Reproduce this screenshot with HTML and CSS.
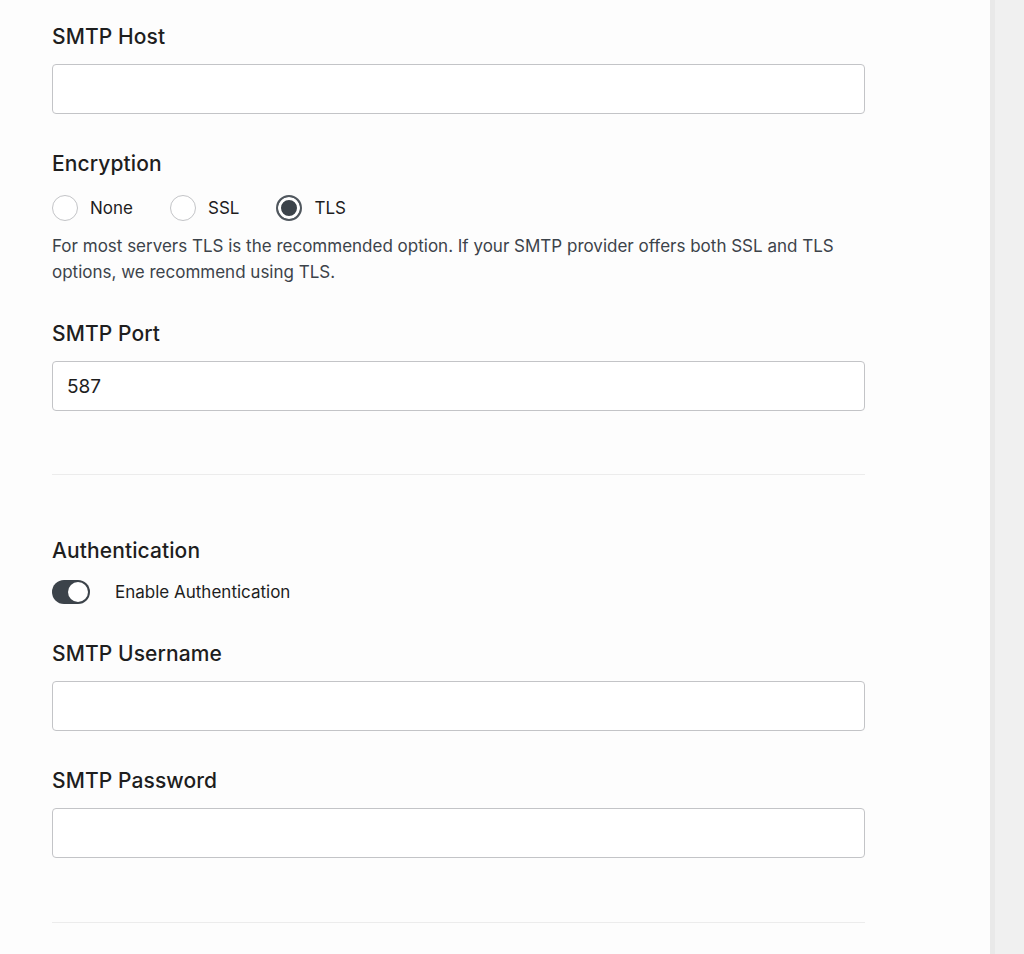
FILE: index.html
```html
<!DOCTYPE html>
<html>
<head>
  <meta charset="utf-8">
  <title>SMTP Settings</title>
  <link rel="stylesheet" href="styles.css">
</head>
<body>
<div class="layout">
  <main class="main">
    <div class="field first">
      <label class="label" for="host">SMTP Host</label>
      <input class="text" id="host" type="text">
    </div>

    <div class="field">
      <div class="label">Encryption</div>
      <div class="radios">
        <label class="radio"><span class="dot"></span>None</label>
        <label class="radio"><span class="dot"></span>SSL</label>
        <label class="radio"><span class="dot on"></span>TLS</label>
      </div>
      <p class="help">For most servers TLS is the recommended option. If your SMTP provider offers both SSL and TLS options, we recommend using TLS.</p>
    </div>

    <div class="field">
      <label class="label" for="port">SMTP Port</label>
      <input class="text" id="port" type="text" value="587">
    </div>

    <hr class="divider">

    <div class="field">
      <div class="label">Authentication</div>
      <label class="toggle"><span class="switch"><span class="knob"></span></span>Enable Authentication</label>
    </div>

    <div class="field">
      <label class="label" for="user">SMTP Username</label>
      <input class="text" id="user" type="text">
    </div>

    <div class="field">
      <label class="label" for="pass">SMTP Password</label>
      <input class="text" id="pass" type="password">
    </div>

    <hr class="divider last">
  </main>
  <aside class="side"></aside>
</div>
</body>
</html>
```

FILE: styles.css
```css
* {box-sizing: border-box}
html, body {
  margin: 0; padding: 0;
  height: 100%;
}
body {
  font-family: Inter, "Liberation Sans", sans-serif;
  color: #1e1e1e;
  background: #fdfdfd;
  overflow: hidden;
}
.layout {
  display: flex;
  height: 954px;
}
.main {
  width: 990px;
  padding: 22px 0 0 52px;
}
.side {
  flex: 1;
  background: #f0f0f0;
  border-left: 5px solid #e9e9e9;
}

.field {
  width: 813px;
  margin-top: 35px;
}
.field.first {
  margin-top: 0;
}
.label {
  display: block;
  font-size: 21px;
  line-height: 28px;
  padding-top: 1px;
  font-weight: 500;
  letter-spacing: 0.1px;
  color: #1e1e1e;
  margin-bottom: 13px;
}
.text {
  display: block;
  width: 813px;
  height: 50px;
  border: 1px solid #c3c4c7;
  border-radius: 4px;
  background: #fff;
  padding: 0 14px;
  font-family: inherit;
  font-size: 19px;
  color: #1e1e1e;
}

.radios {
  display: flex;
  gap: 37px;
  margin-top: 17px;
}
.radio {
  display: flex;
  align-items: center;
  gap: 12px;
  font-size: 17px;
  line-height: 26px;
  color: #1e1e1e;
}
.dot {
  width: 26px;
  height: 26px;
  border-radius: 50%;
  border: 1px solid #c3c4c7;
  background: #fff;
}
.dot.on {
  border: 2px solid #50575e;
  background: #3c434a;
  box-shadow: inset 0 0 0 3px #fff;
}
.help {
  margin: 12px 0 -1px;
  font-size: 17px;
  line-height: 26px;
  color: #3c434a;
}

.divider {
  width: 813px;
  margin: 63px 0 61px;
  border: 0;
  border-top: 1px solid #ececec;
}
.divider.last {
  margin-top: 64px;
}

.toggle {
  display: flex;
  align-items: center;
  gap: 25px;
  margin-top: 15px;
  font-size: 17px;
  line-height: 24px;
  color: #1e1e1e;
}
.switch {
  display: flex;
  justify-content: flex-end;
  align-items: center;
  width: 38px;
  height: 24px;
  border-radius: 12px;
  background: #3c434a;
  padding: 2px;
}
.knob {
  width: 20px;
  height: 20px;
  border-radius: 50%;
  background: #fff;
}
```
